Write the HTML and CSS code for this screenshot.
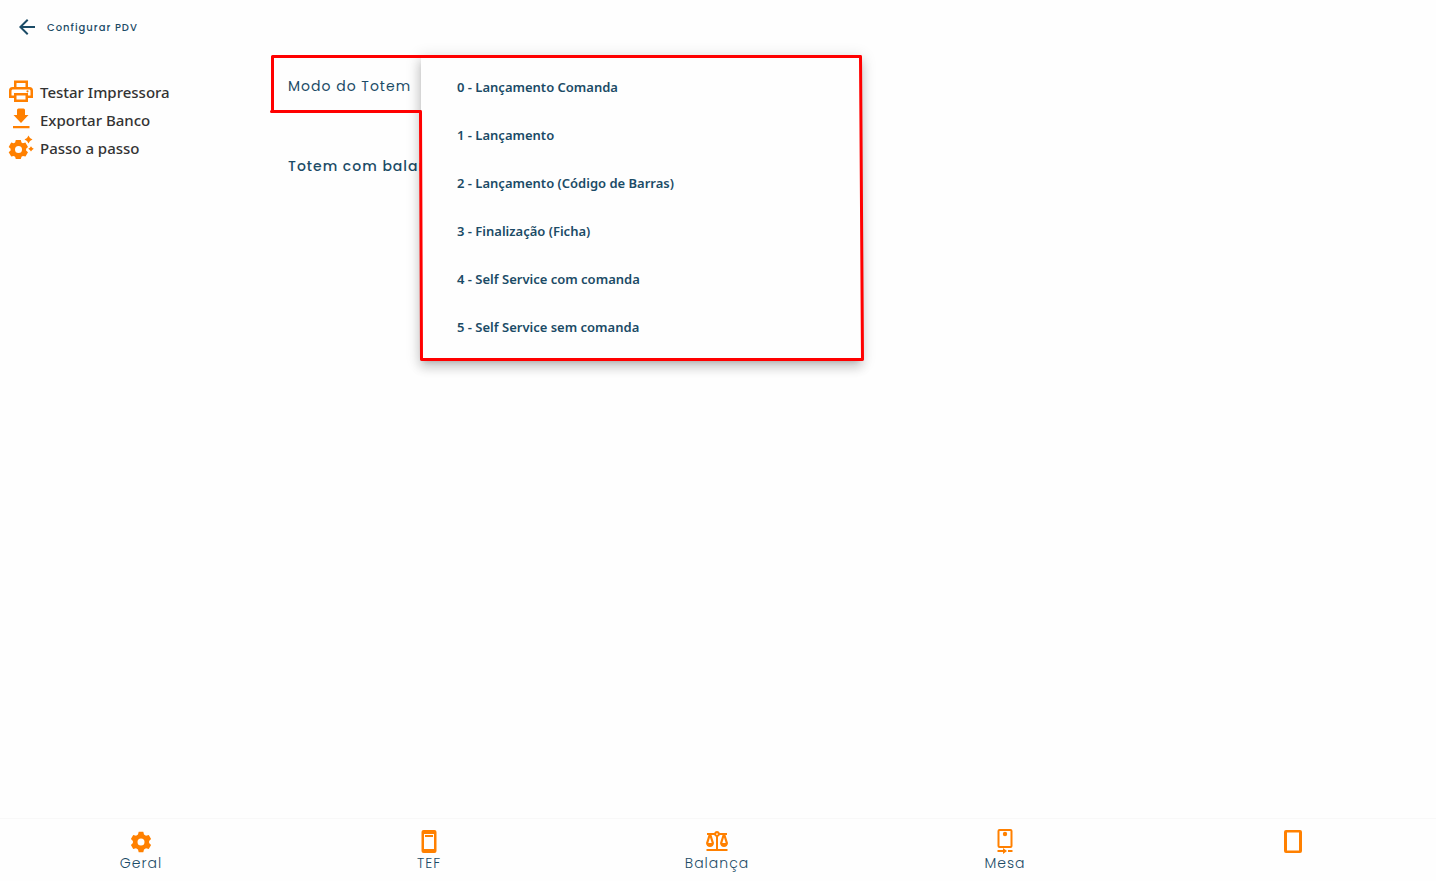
FILE: index.html
```html
<!DOCTYPE html>
<html lang="pt-BR">
<head>
    <meta charset="UTF-8">
    <meta name="viewport" content="width=device-width, initial-scale=1.0">
    <title>Configurar PDV</title>
    <link rel="stylesheet" href="styles.css">
</head>
<body>

    <!-- Cabeçalho -->
    <header class="header">
        <button class="back-button" type="button" aria-label="Voltar">
            <svg width="24" height="24" viewBox="0 0 24 24"><path d="M20 11H7.830l5.590-5.590L12 4l-8 8 8 8 1.410-1.410L7.830 13H20z"/></svg>
        </button>
        <h1 class="title">Configurar PDV</h1>
    </header>

    <div class="content">
        <!-- Ações -->
        <aside class="sidebar">
            <button class="action" type="button">
                <svg width="24" height="24" viewBox="0 0 24 24"><path fill-rule="evenodd" d="M5 .5h14V7h1.500A3.500 3.500 0 0 1 24 10.500V18h-5v4H5v-4H0v-7.500A3.500 3.500 0 0 1 3.500 7H5zM7.500 3v4h9V3zM4 9.500c-1 0-1.500.5-1.500 1.500v4.500H5V13h14v2.500h2.500V11c0-1-.5-1.500-1.500-1.500zM7.500 15.500v4h9v-4z"/><circle cx="18.500" cy="11.300" r="1.100"/></svg>
                <span>Testar Impressora</span>
            </button>
            <button class="action" type="button">
                <svg width="24" height="24" viewBox="0 0 24 24"><path d="M9.500.500h5q1.500 0 1.500 1.500v5h3.500L12 15 4.500 7H8V2Q8 .5 9.500.5zM4 18h16.500v2.300H4z"/></svg>
                <span>Exportar Banco</span>
            </button>
            <button class="action" type="button">
                <svg width="24" height="24" viewBox="0 0 24 24"><path fill-rule="evenodd" d="M6.800 4h5l.7 2.500 1.400.8 2.500-.8 2.600 4.400-1.900 1.900v1.600l1.900 1.900-2.500 4.300-2.600-.7-1.400.8-.7 2.300h-5l-.7-2.300-1.400-.8-2.500.7L-.3 16.300l1.900-1.900v-1.600l-1.900-1.900L2.200 6.500l2.500.8 1.400-.8zM9.500 10a3.500 3.500 0 1 0 0 7 3.500 3.500 0 0 0 0-7z"/><path d="M19.500-.5l1.500 2.500 2.500 1.500L21 5l-1.500 2.500L18 5l-2.500-1.500L18 2zM22 10.200l1.100 1.500 1.700 1.100-1.700 1.100-1.100 1.500-1.100-1.500-1.700-1.100 1.700-1.100z"/></svg>
                <span>Passo a passo</span>
            </button>
        </aside>

        <!-- Configurações do totem -->
        <main class="settings">
            <div class="field">
                <span class="field-label" id="modoLabel">Modo do Totem</span>
                <div class="menu" role="listbox" aria-labelledby="modoLabel">
                    <button class="option" type="button" role="option">0 - Lançamento Comanda</button>
                    <button class="option" type="button" role="option">1 - Lançamento</button>
                    <button class="option" type="button" role="option">2 - Lançamento (Código de Barras)</button>
                    <button class="option" type="button" role="option">3 - Finalização (Ficha)</button>
                    <button class="option" type="button" role="option">4 - Self Service com comanda</button>
                    <button class="option" type="button" role="option">5 - Self Service sem comanda</button>
                </div>
                <!-- Marcação em vermelho -->
                <svg class="marker" width="594" height="308" viewBox="0 0 594 308"><path d="M2.500 2.500H590.500L592.500 305.500H151.500L150.500 57.500H1.500H2.500z"/></svg>
            </div>
            <div class="field">
                <span class="field-label strong">Totem com balança</span>
            </div>
        </main>
    </div>

    <!-- Abas -->
    <nav class="tabs">
        <a class="tab" href="#geral">
            <svg width="24" height="24" viewBox="0 0 24 24"><path fill-rule="evenodd" d="M9.700 1.800h4.600l.7 2.800 2 1.200 2.800-.8 2.300 4-2 2v2l2 2-2.300 4-2.800-.8-2 1.200-.7 2.800H9.700L9 19.400l-2-1.200-2.800.8-2.300-4 2-2v-2l-2-2 2.300-4 2.800.8 2-1.200zM12 8.500a3.500 3.500 0 1 0 0 7 3.500 3.500 0 0 0 0-7z"/></svg>
            <span>Geral</span>
        </a>
        <a class="tab" href="#tef">
            <svg width="24" height="24" viewBox="0 0 24 24"><path fill-rule="evenodd" d="M6.500 0h11q2 0 2 2v19q0 2-2 2h-11q-2 0-2-2V2q0-2 2-2zM7 4v15h10V4z"/><path d="M8 5h8v2H8z"/></svg>
            <span>TEF</span>
        </a>
        <a class="tab" href="#balanca">
            <svg width="24" height="24" viewBox="0 0 24 24"><path d="M2 3h7.200a3 3 0 0 1 5.600 0H22v2h-1.500L23 13q-.5 4-4 4t-4-4l2.500-8h-2.700q-.6 1.300-1.800 1.800V19h9.500v2h-21v-2H11V6.800Q9.800 6.300 9.200 5H6.500L9 13q-.5 4-4 4t-4-4l2.500-8H2zM5 7.500L3.300 13h3.400zM19 7.500L17.300 13h3.400zM12 3.200a.9.9 0 1 0 0 1.800.9.9 0 0 0 0-1.800z" fill-rule="evenodd"/></svg>
            <span>Balança</span>
        </a>
        <a class="tab" href="#mesa">
            <svg width="24" height="24" viewBox="0 0 24 24"><path fill-rule="evenodd" d="M6.500-1h11q2 0 2 2v15q0 2-2 2h-11q-2 0-2-2V1q0-2 2-2zM6.500 1v15h11V1z"/><circle cx="12" cy="4" r="2.200"/><path d="M4.500 20H10v-2l4 3-4 3v-2H4.500zM15 20h4.500v2H15z"/></svg>
            <span>Mesa</span>
        </a>
        <a class="tab" href="#outros" aria-label="Outros">
            <svg width="24" height="24" viewBox="0 0 24 24"><path fill-rule="evenodd" d="M5 0h14q2 0 2 2v19q0 2-2 2H5q-2 0-2-2V2q0-2 2-2zM6 2.500v18h12v-18z"/></svg>
        </a>
    </nav>

</body>
</html>
```

FILE: styles.css
```css
* {
    box-sizing: border-box;
}
body {
    margin: 0;
    min-height: 100vh;
    display: flex;
    flex-direction: column;
    overflow-x: hidden;
    background-color: #fefefe;
    color: #1b4b66;
    font-family: Poppins, Inter, sans-serif;
}
button {
    border: none;
    background: none;
    padding: 0;
    color: inherit;
    cursor: pointer;
}
svg {
    flex: none;
    fill: #ff8000;
    overflow: visible;
}
.header {
    display: flex;
    align-items: center;
    gap: 8px;
    height: 54px;
    padding: 0 15px;
}
.back-button {
    display: flex;
}
.back-button svg {
    fill: #1b4b66;
}
.title {
    margin: 0;
    padding-top: 2px;
    font-size: 10px;
    font-weight: 500;
    letter-spacing: 1px;
}
.content {
    display: flex;
    flex: 1;
}
.sidebar {
    width: 272px;
    padding: 24px 9px;
}
.action {
    display: flex;
    align-items: center;
    gap: 7px;
    height: 28px;
    color: #333;
    font-family: "Segoe UI", "Noto Sans", sans-serif;
    font-size: 15px;
    font-weight: 500;
}
.settings {
    flex: 1;
    display: flex;
    flex-direction: column;
    gap: 16px;
}
.field {
    position: relative;
    display: flex;
    align-items: center;
    height: 64px;
    padding: 0 16px;
}
.field-label {
    white-space: nowrap;
    font-size: 14px;
    font-weight: 400;
    letter-spacing: 1px;
}
.strong {
    font-weight: 500;
}
.menu {
    position: absolute;
    top: 1px;
    left: 149px;
    z-index: 1;
    width: 440px;
    padding: 8px 0;
    background-color: #fefefe;
    box-shadow: 0 5px 5px -3px rgba(0, 0, 0, 0.2), 0 8px 10px 1px rgba(0, 0, 0, 0.14), 0 3px 14px 2px rgba(0, 0, 0, 0.12);
}
.option {
    display: block;
    width: 100%;
    height: 48px;
    padding: 0 36px;
    text-align: left;
    font-family: "Segoe UI", "Noto Sans", sans-serif;
    font-size: 13px;
    font-weight: 600;
}
.marker {
    position: absolute;
    top: 0;
    left: -2px;
    z-index: 2;
    pointer-events: none;
}
.marker path {
    fill: none;
    stroke: #ff0000;
    stroke-width: 3;
    stroke-linejoin: round;
}
.tabs {
    display: flex;
    height: 63px;
    margin: 0 -1px 0 -3px;
    padding-top: 11px;
    border-top: 1px solid #f8f8f8;
}
.tab {
    flex: 1;
    display: flex;
    flex-direction: column;
    align-items: center;
    color: inherit;
    text-decoration: none;
    font-size: 14px;
    font-weight: 300;
    line-height: 18px;
    letter-spacing: 1px;
}
```
